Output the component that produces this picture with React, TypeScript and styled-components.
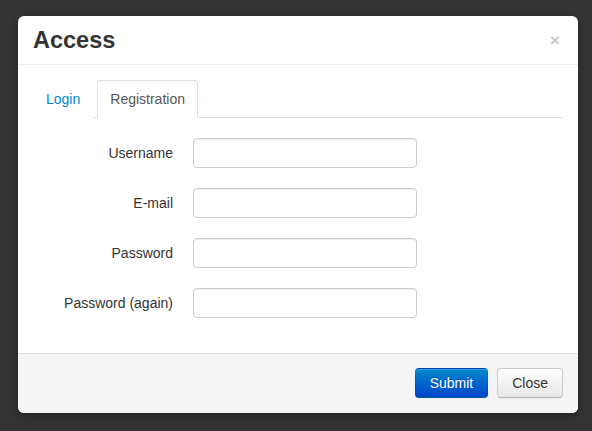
import React, { useState } from 'react';
import styled, { createGlobalStyle } from 'styled-components';

const GlobalStyle = createGlobalStyle`
  html, body {
    margin: 0;
    padding: 0;
    background: #333333;
    font-family: "Liberation Sans", Arial, sans-serif;
    font-size: 14px;
    line-height: 20px;
    color: #333333;
  }
  * { box-sizing: border-box; }
`;

const Backdrop = styled.div`
  width: 592px;
  height: 431px;
  padding: 16px 14px 0 18px;
`;

const Modal = styled.div`
  width: 560px;
  background: #ffffff;
  border-radius: 6px;
  box-shadow: 0 3px 7px rgba(0, 0, 0, 0.3);
  overflow: hidden;
`;

const Header = styled.div`
  display: flex;
  align-items: center;
  justify-content: space-between;
  padding: 9px 18px 9px 15px;
  border-bottom: 1px solid #eeeeee;
`;

const Title = styled.h3`
  margin: 0;
  font-size: 23.5px;
  line-height: 30px;
  font-weight: bold;
  color: #333333;
`;

const CloseX = styled.button`
  border: 0;
  background: none;
  padding: 0;
  margin-top: 1px;
  font-family: "Liberation Sans", Arial, sans-serif;
  font-size: 17px;
  font-weight: bold;
  line-height: 20px;
  color: #000;
  opacity: 0.22;
  cursor: pointer;
`;

const Body = styled.div`
  padding: 15px;
`;

const Tabs = styled.ul`
  display: flex;
  list-style: none;
  margin: 0 0 20px;
  padding: 0;
  border-bottom: 1px solid #dddddd;
`;

const Tab = styled.li<{ $active: boolean }>`
  margin-bottom: -1px;
  margin-right: 4px;
  padding: 8px 12px;
  line-height: 20px;
  border: 1px solid ${({ $active }) => ($active ? '#dddddd' : 'transparent')};
  border-bottom-color: transparent;
  border-radius: 4px 4px 0 0;
  background: #ffffff;
  color: ${({ $active }) => ($active ? '#555555' : '#0088cc')};
  cursor: pointer;
`;

const Row = styled.div`
  display: flex;
  margin-bottom: 20px;
`;

const Label = styled.label`
  width: 140px;
  padding-top: 5px;
  text-align: right;
  line-height: 20px;
`;

const Input = styled.input`
  margin-left: 20px;
  width: 224px;
  height: 30px;
  padding: 4px 6px;
  border: 1px solid #cccccc;
  border-radius: 4px;
  box-shadow: inset 0 1px 1px rgba(0, 0, 0, 0.075);
  font-family: inherit;
  font-size: 14px;
  color: #555555;
  outline: none;
`;

const Footer = styled.div`
  display: flex;
  justify-content: flex-end;
  gap: 9px;
  padding: 14px 15px 15px;
  background: #f5f5f5;
  border-top: 1px solid #dddddd;
`;

const Button = styled.button<{ $primary?: boolean }>`
  height: 30px;
  padding: 4px 14px;
  font-family: "Liberation Sans", Arial, sans-serif;
  font-size: 14px;
  line-height: 20px;
  border-radius: 4px;
  cursor: pointer;
  color: ${({ $primary }) => ($primary ? '#ffffff' : '#333333')};
  text-shadow: ${({ $primary }) =>
    $primary ? '0 -1px 0 rgba(0,0,0,0.25)' : '0 1px 1px rgba(255,255,255,0.75)'};
  background: ${({ $primary }) =>
    $primary
      ? 'linear-gradient(to bottom, #0088cc, #0044cc)'
      : 'linear-gradient(to bottom, #ffffff, #e6e6e6)'};
  border: 1px solid ${({ $primary }) => ($primary ? 'rgba(0,0,0,0.1)' : '#cccccc')};
  border-bottom-color: ${({ $primary }) => ($primary ? 'rgba(0,0,0,0.25)' : '#b3b3b3')};
  box-shadow: inset 0 1px 0 rgba(255, 255, 255, 0.2), 0 1px 2px rgba(0, 0, 0, 0.05);
`;

const fields = ['Username', 'E-mail', 'Password', 'Password (again)'];

export default function App() {
  const [tab, setTab] = useState('Registration');
  return (
    <>
      <GlobalStyle />
      <Backdrop>
        <Modal>
          <Header>
            <Title>Access</Title>
            <CloseX>×</CloseX>
          </Header>
          <Body>
            <Tabs>
              {['Login', 'Registration'].map((t) => (
                <Tab key={t} $active={tab === t} onClick={() => setTab(t)}>
                  {t}
                </Tab>
              ))}
            </Tabs>
            {fields.map((f) => (
              <Row key={f}>
                <Label>{f}</Label>
                <Input type={f.startsWith('Password') ? 'password' : 'text'} />
              </Row>
            ))}
          </Body>
          <Footer>
            <Button $primary>Submit</Button>
            <Button>Close</Button>
          </Footer>
        </Modal>
      </Backdrop>
    </>
  );
}
